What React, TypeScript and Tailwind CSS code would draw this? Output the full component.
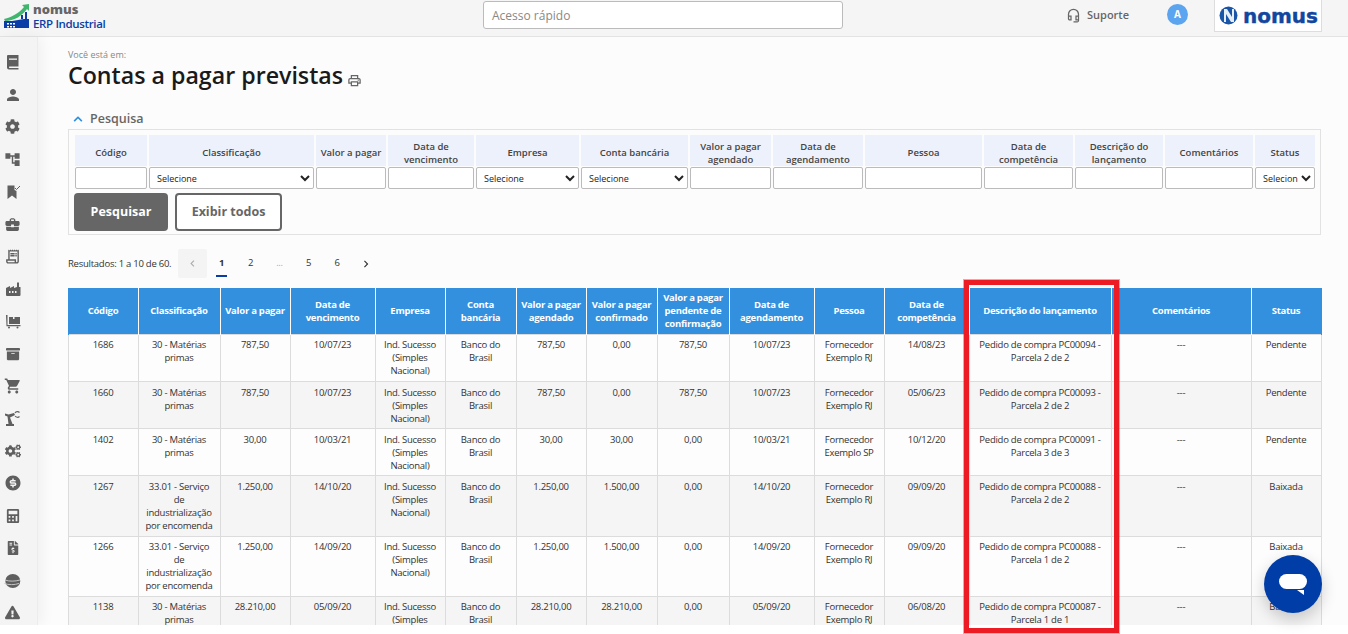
import React from "react";
import {
  FaCog, FaArchive, FaCogs, FaCalculator, FaFileInvoiceDollar, FaExclamationTriangle, FaChevronUp,
} from "react-icons/fa";
import {
  MdPerson, MdAccountTree, MdBusinessCenter, MdOutlineReceiptLong, MdShoppingCart,
  MdOutlineHeadsetMic, MdOutlinePrint, MdChevronLeft, MdChevronRight,
} from "react-icons/md";
import { RiMoneyDollarCircleFill } from "react-icons/ri";

const BookIcon = () => (
  <svg width="16" height="16" viewBox="0 0 16 16" fill="currentColor">
    <path d="M3 1h10.500v11.500H4.500a.8.8 0 0 0 0 1.500h9v1.500H4a2 2 0 0 1-2-2V2a1 1 0 0 1 1-1z" />
    <rect x="4" y="4.500" width="8" height="1.300" fill="#f4f4f4" />
  </svg>
);
const BookmarkCheck = () => (
  <svg width="16" height="16" viewBox="0 0 16 16" fill="currentColor">
    <path d="M2.500 1.500h7V6l2 1v8L7 11.500 2.500 15z" />
    <path d="M10 4l1.500 1.500L15 2" fill="none" stroke="currentColor" strokeWidth="1" />
  </svg>
);
const Factory = () => (
  <svg width="16" height="16" viewBox="0 0 16 16" fill="currentColor">
    <path d="M1 7l4-2v2l4-2v2l3-1V1.500h2V6h1.500v8a1 1 0 0 1-1 1H2a1 1 0 0 1-1-1z" />
    <rect x="4" y="10" width="1.500" height="2" fill="#f4f4f4" />
    <rect x="7" y="10" width="1.500" height="2" fill="#f4f4f4" />
    <rect x="10" y="10" width="1.500" height="2" fill="#f4f4f4" />
  </svg>
);
const Dolly = () => (
  <svg width="16" height="16" viewBox="0 0 16 16" fill="currentColor">
    <path d="M1 2h1.500v10h13v1.200H1.500z" />
    <path d="M4 4h4v2h1.500V4H15v7H4z" />
    <circle cx="4" cy="14.500" r="1" />
    <circle cx="12.500" cy="14.500" r="1" />
  </svg>
);
const RobotArm = () => (
  <svg width="17" height="17" viewBox="0 0 17 17" fill="currentColor">
    <path d="M2 14h8v2H2z" />
    <path d="M4.500 14L3.500 6.500 1 5.500V3.500l3.500 1L10 3l1 2-5 2.500L8.500 14z" />
    <path d="M15.500 2.500A2.800 2.800 0 0 0 11 3M15.500 6.500A2.800 2.800 0 0 1 11.200 6" fill="none" stroke="currentColor" strokeWidth="1.200" />
  </svg>
);
const Planet = () => (
  <svg width="17" height="16" viewBox="0 0 17 16" className="mt-[2px]">
    <ellipse cx="8.800" cy="8" rx="7.500" ry="7" fill="#5f5f5f" />
    <path d="M1 7c4 1.500 10 1.500 15 0M.5 10.500c4 1.500 10 1.500 14.500 0" stroke="#c4c4c4" strokeWidth="1" fill="none" />
  </svg>
);

const icons: React.ReactNode[] = [
  <BookIcon />, <MdPerson size={18} />, <FaCog size={15} />, <MdAccountTree size={17} />,
  <BookmarkCheck />, <MdBusinessCenter size={17} />, <MdOutlineReceiptLong size={17} />, <Factory />,
  <Dolly />, <FaArchive size={14} />, <MdShoppingCart size={18} />, <RobotArm />,
  <FaCogs size={16} />, <RiMoneyDollarCircleFill size={18} />, <FaCalculator size={14} />, <FaFileInvoiceDollar size={14} />,
  <Planet />, <FaExclamationTriangle size={15} />,
];

const filters: { label: string; w: string; select?: boolean }[] = [
  { label: "Código", w: "w-[72px]" },
  { label: "Classificação", w: "w-[165px]", select: true },
  { label: "Valor a pagar", w: "w-[70px]" },
  { label: "Data de vencimento", w: "w-[86px]" },
  { label: "Empresa", w: "w-[103px]", select: true },
  { label: "Conta bancária", w: "w-[107px]", select: true },
  { label: "Valor a pagar agendado", w: "w-[81px]" },
  { label: "Data de agendamento", w: "w-[90px]" },
  { label: "Pessoa", w: "w-[117px]" },
  { label: "Data de competência", w: "w-[89px]" },
  { label: "Descrição do lançamento", w: "w-[88px]" },
  { label: "Comentários", w: "w-[88px]" },
  { label: "Status", w: "w-[60px]", select: true },
];

const cols: [string, string][] = [
  ["Código", "w-[70px]"],
  ["Classificação", "w-[82px]"],
  ["Valor a pagar", "w-[70px]"],
  ["Data de vencimento", "w-[85px]"],
  ["Empresa", "w-[70px]"],
  ["Conta bancária", "w-[71px]"],
  ["Valor a pagar agendado", "w-[70px]"],
  ["Valor a pagar confirmado", "w-[71px]"],
  ["Valor a pagar pendente de confirmação", "w-[72px]"],
  ["Data de agendamento", "w-[85px]"],
  ["Pessoa", "w-[70px]"],
  ["Data de competência", "w-[85px]"],
  ["Descrição do lançamento", "w-[142px]"],
  ["Comentários", "w-[140px]"],
  ["Status", "w-[70px]"],
];

const MP = "30 - Matérias primas";
const SV = "33.01 - Serviço de industrialização por encomenda";
const rows: { h: string; pt: string; c: string[] }[] = [
  { h: "h-[47px]", pt: "pt-[3px]", c: ["1686", MP, "787,50", "10/07/23", "787,50", "0,00", "787,50", "10/07/23", "Fornecedor Exemplo RJ", "14/08/23", "Pedido de compra PC00094 - Parcela 2 de 2", "Pendente"] },
  { h: "h-[47px]", pt: "pt-[4px]", c: ["1660", MP, "787,50", "10/07/23", "787,50", "0,00", "787,50", "10/07/23", "Fornecedor Exemplo RJ", "05/06/23", "Pedido de compra PC00093 - Parcela 2 de 2", "Pendente"] },
  { h: "h-[47px]", pt: "pt-[4px]", c: ["1402", MP, "30,00", "10/03/21", "30,00", "30,00", "0,00", "10/03/21", "Fornecedor Exemplo SP", "10/12/20", "Pedido de compra PC00091 - Parcela 3 de 3", "Pendente"] },
  { h: "h-[61px]", pt: "pt-[4px]", c: ["1267", SV, "1.250,00", "14/10/20", "1.250,00", "1.500,00", "0,00", "14/10/20", "Fornecedor Exemplo RJ", "09/09/20", "Pedido de compra PC00088 - Parcela 2 de 2", "Baixada"] },
  { h: "h-[60px]", pt: "pt-[3px]", c: ["1266", SV, "1.250,00", "14/09/20", "1.250,00", "1.500,00", "0,00", "14/09/20", "Fornecedor Exemplo RJ", "09/09/20", "Pedido de compra PC00088 - Parcela 1 de 2", "Baixada"] },
  { h: "h-[47px]", pt: "pt-[3px]", c: ["1138", MP, "28.210,00", "05/09/20", "28.210,00", "28.210,00", "0,00", "05/09/20", "Fornecedor Exemplo RJ", "06/08/20", "Pedido de compra PC00087 - Parcela 1 de 1", "Baixada"] },
];

function fullRow(c: string[]) {
  return [
    c[0], c[1], c[2], c[3], "Ind. Sucesso (Simples Nacional)", "Banco do Brasil",
    c[4], c[5], c[6], c[7], c[8], c[9], c[10], "---", c[11],
  ];
}

export default function App() {
  return (
    <div className="relative h-[634px] w-[1348px] overflow-hidden bg-white font-['Open_Sans',sans-serif] text-[#333]">
      <div className="flex h-[625px] flex-col overflow-hidden bg-[#fcfcfc]">
        {/* Top bar */}
        <header className="flex h-[37px] shrink-0 items-start border-b border-[#e3e3e3] bg-[#f5f5f5]">
          <div className="flex h-full w-[483px] shrink-0 items-start pl-1 pt-[3px]">
            <svg width="26" height="25" viewBox="0 0 26 25" className="shrink-0">
              <path d="M0 16C8 14 15 10 20 4l-2-2 7-1v7l-2-2C18 13 10 18 1 18z" fill="#3fb56e" />
              <path d="M21 9h2v7h-2zM17 12h2v4h-2z" fill="#0a3da6" />
              <path d="M0 18h8l12-2h5v10H0z" fill="#0a3da6" />
              <path d="M3 20h2v1.500H3zM6 20h2v1.500H6zM9 20h2v1.500H9zM3 23h2v1.500H3zM6 23h2v1.500H6zM9 23h2v1.500H9z" fill="#fff" />
            </svg>
            <div className="ml-[3px] flex flex-col">
              <span className="h-[13px] text-[13px] font-extrabold leading-[13px] text-[#666]">nomus</span>
              <span className="mt-[1px] text-[11.500px] font-semibold leading-[13px] tracking-[-0.35px] text-[#0a3da6]">ERP Industrial</span>
            </div>
          </div>
          <div className="mt-[1px] flex h-[28px] w-[360px] shrink-0 items-center rounded-[3px] border border-[#bbb] bg-white px-2 pt-[1px] text-[12px] text-[#888]">
            Acesso rápido
          </div>
          <div className="ml-[223px] flex h-[30px] w-[101px] shrink-0 items-center">
            <MdOutlineHeadsetMic size={15} className="text-[#666]" />
            <span className="ml-[6px] text-[11px] font-semibold text-[#666]">Suporte</span>
          </div>
          <div className="mt-[4px] flex h-[21px] w-[21px] shrink-0 items-center justify-center rounded-full bg-[#5ba4ef] text-[10px] font-bold text-white">
            A
          </div>
          <div className="ml-[26px] mt-[-1px] flex h-[33px] w-[108px] shrink-0 items-center border border-[#ddd] bg-white pl-[4px]">
            <svg width="19" height="19" viewBox="0 0 19 19" className="shrink-0">
              <circle cx="9.500" cy="9.500" r="9" fill="#1a55a8" />
              <path d="M5 3h3l5 8V3h2v13h-3L7 8v8H5z" fill="#e6eef8" />
            </svg>
            <span className="ml-[5px] font-['DejaVu_Sans',sans-serif] text-[20px] font-bold leading-none text-[#12479f] [-webkit-text-stroke:0.4px_#12479f]">nomus</span>
          </div>
        </header>

        <div className="flex min-h-0 flex-1">
          {/* Side rail */}
          <aside className="z-10 flex w-[38px] shrink-0 flex-col items-center border-r border-[#ececec] bg-[#f4f4f4] pr-[12px] pt-[9px] text-[#5f5f5f] shadow-[4px_0_14px_rgba(0,0,0,0.05)]">
            {icons.map((ic, i) => (
              <div key={i} className="flex h-[32.400px] w-[26px] shrink-0 items-center justify-center">
                {ic}
              </div>
            ))}
          </aside>

          {/* Main */}
          <main className="min-w-0 flex-1 pl-[30px] pr-[27px] pt-[11px]">
            <div className="text-[9px] leading-[13px] text-[#888]">Você está em:</div>
            <div className="mt-[-2px] flex items-end">
              <h1 className="text-[23.200px] font-semibold leading-[33px] text-[#1a1a1a]">Contas a pagar previstas</h1>
              <MdOutlinePrint size={15} className="mb-[4px] ml-[4px] text-[#666]" />
            </div>
            <div className="mt-[17px] flex h-[20px] items-center">
              <FaChevronUp size={10} className="ml-[5px] text-[#2f8fe0]" />
              <span className="ml-[7px] text-[12.500px] font-semibold text-[#666]">Pesquisa</span>
            </div>

            {/* Filter box */}
            <section className="h-[106px] w-[1253px] border border-[#e2e2e2] pl-[4px] pt-[4px]">
              <table className="w-[1244px] table-fixed border-separate border-spacing-x-[2px] border-spacing-y-[1px]">
                <colgroup>
                  {filters.map((f) => (
                    <col key={f.label} className={f.w} />
                  ))}
                </colgroup>
                <thead>
                  <tr>
                    {filters.map((f) => (
                      <th key={f.label} className="h-[31px] bg-[#edf1fb] p-0 pt-[4px] text-center text-[9.500px] font-semibold leading-[13px] text-[#444]">
                        {f.label}
                      </th>
                    ))}
                  </tr>
                </thead>
                <tbody>
                  <tr>
                    {filters.map((f) => (
                      <td key={f.label} className="p-0 align-top">
                        {f.select ? (
                          <select className="block h-[22px] w-full appearance-auto rounded-[2px] border border-[#bbb] bg-white pl-[3px] text-[9px] text-[#222]">
                            <option>Selecione</option>
                          </select>
                        ) : (
                          <input aria-label={f.label} className="block h-[22px] w-full rounded-[2px] border border-[#bbb] bg-white" />
                        )}
                      </td>
                    ))}
                  </tr>
                </tbody>
              </table>
              <div className="ml-[1px] mt-[3px] flex gap-[7px]">
                <button className="h-[38px] w-[94px] rounded-[4px] bg-[#666] text-[12.500px] font-bold text-white">Pesquisar</button>
                <button className="h-[38px] w-[107px] rounded-[4px] border-2 border-[#666] bg-white text-[12.500px] font-bold text-[#666]">Exibir todos</button>
              </div>
            </section>

            {/* Pager */}
            <div className="mt-[14px] flex h-[29px] items-center text-[9.500px] tracking-[-0.25px]">
              <span className="w-[110px] whitespace-nowrap pt-[1px] text-[#333]">Resultados: 1 a 10 de 60.</span>
              <div className="flex h-[29px] w-[29px] items-center justify-center rounded-[2px] bg-[#f4f4f4] text-[#aaa]">
                <MdChevronLeft size={13} />
              </div>
              <div className="relative flex h-[29px] w-[29px] items-center justify-center font-bold text-[#333]">
                1
                <span className="absolute bottom-[1px] left-[9px] h-[2px] w-[11px] bg-[#0a3da6]" />
              </div>
              <div className="flex h-[29px] w-[29px] items-center justify-center">2</div>
              <div className="flex h-[29px] w-[29px] items-center justify-center text-[#aaa]">...</div>
              <div className="flex h-[29px] w-[29px] items-center justify-center">5</div>
              <div className="flex h-[29px] w-[28px] items-center justify-center">6</div>
              <div className="flex h-[29px] w-[29px] items-center justify-center">
                <MdChevronRight size={14} />
              </div>
            </div>

            {/* Results table */}
            <table className="mt-[10px] w-[1253px] table-fixed border-collapse text-center text-[9.500px] leading-[13px] tracking-[-0.25px]">
              <colgroup>
                {cols.map(([n, w]) => (
                  <col key={n} className={w} />
                ))}
              </colgroup>
              <thead>
                <tr className="h-[46px] bg-[#3390df] text-white">
                  {cols.map(([n]) => (
                    <th key={n} className="border-x border-white py-0 pl-[1.500px] pr-[2.500px] font-bold first:border-l-[#3390df] last:border-r-[#3390df]">{n}</th>
                  ))}
                </tr>
              </thead>
              <tbody>
                {rows.map((r, i) => (
                  <tr key={r.c[0]} className={`${r.h} ${i % 2 === 0 ? "bg-[#fdfdfd]" : "bg-[#f5f5f5]"}`}>
                    {fullRow(r.c).map((v, j) => (
                      <td key={j} className={`${r.pt} border border-[#dcdcdc] pb-[2px] pl-[4.500px] pr-[5.500px] align-top`}>{v}</td>
                    ))}
                  </tr>
                ))}
              </tbody>
            </table>
          </main>
        </div>
      </div>

      {/* Chat launcher */}
      <div className="absolute left-[1264px] top-[555px] flex h-[58px] w-[58px] items-center justify-center rounded-full bg-[#003da6] shadow-[0_6px_16px_rgba(0,0,0,0.2)]">
        <svg width="30" height="24" viewBox="0 0 30 24">
          <rect x="1" y="2" width="28" height="15" rx="7.500" fill="#fff" />
          <path d="M19 18h7v5z" fill="#fff" />
        </svg>
      </div>

      {/* Red annotation */}
      <div className="pointer-events-none absolute left-[964px] top-[280px] h-[353px] w-[155px] border-[5px] border-[#ed1c24] shadow-[0_0_0_1px_rgba(237,28,36,0.4)]" />
    </div>
  );
}
